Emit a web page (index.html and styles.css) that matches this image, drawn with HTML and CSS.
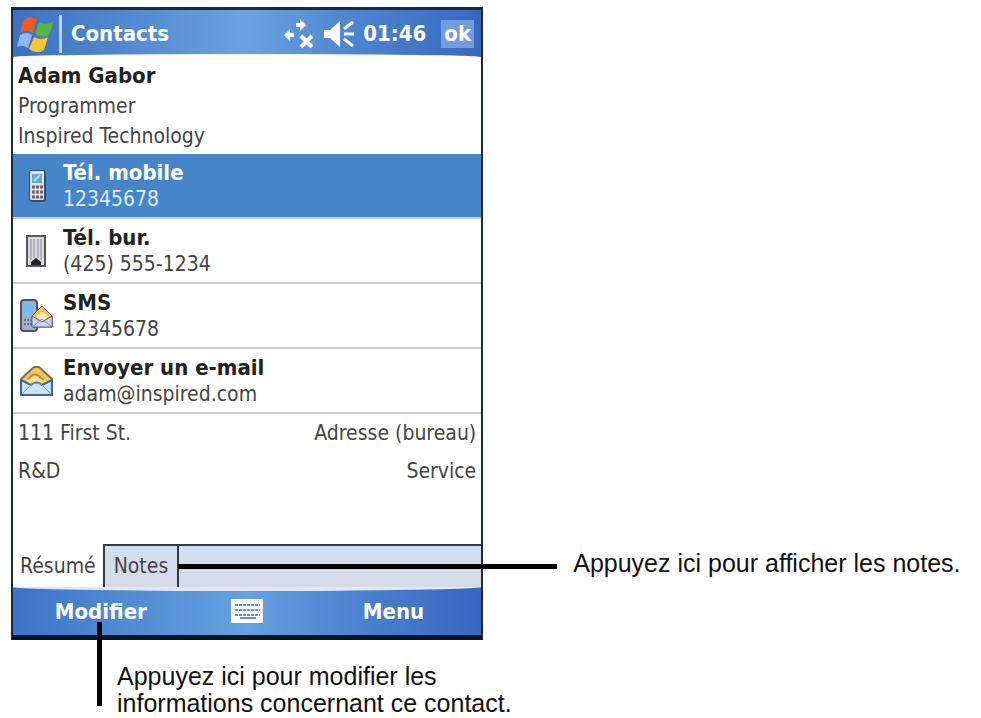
FILE: index.html
```html
<!DOCTYPE html>
<html lang="fr">
<head>
  <meta charset="UTF-8" />
  <meta name="viewport" content="width=device-width, initial-scale=1.0"/>
  <title>Contacts</title>
  <link rel="stylesheet" href="styles.css">
</head>
<body>
  <main class="guide">
    <section class="screen">
      <header class="title-bar">
        <svg class="flag" width="38" height="40" viewBox="0 0 38 40">
          <path d="M6 7 Q11 1 20 5 L16 19 Q10 14 3 19Z" fill="#ea5b25"/>
          <path d="M22 8 Q28 12 37 7 L32 21 Q26 25 18 20Z" fill="#55b848"/>
          <path d="M3 21 Q9 17 15 21 L11 34 Q6 30 0 33Z" fill="#8fb6f5"/>
          <path d="M17 23 Q24 27 31 23 L27 36 Q20 41 12 35Z" fill="#f8c62e"/>
        </svg>
        <span class="separator"></span>
        <h1>Contacts</h1>
        <svg class="connection" width="32" height="32" viewBox="0 0 32 32">
          <path d="M1 17l6-6v4h4v4H7v4z" fill="#fff"/>
          <path d="M23 7l-6-6v4h-4v4h4v4z" fill="#fff"/>
          <path d="M18 18l11 11M29 18L18 29" fill="none" stroke="#fff" stroke-width="4"/>
        </svg>
        <svg class="speaker" width="32" height="28" viewBox="0 0 32 28">
          <path d="M1 10h6L17 1v26L7 18H1z" fill="#fff"/>
          <path d="M21 9l9-7M21 14h10M21 19l9 7" stroke="#fff" stroke-width="3"/>
        </svg>
        <span class="clock">01:46</span>
        <button class="ok">ok</button>
      </header>

      <div class="identity">
        <h2>Adam Gabor</h2>
        <p>Programmer</p>
        <p>Inspired Technology</p>
      </div>

      <nav class="actions">
        <a class="action selected" href="#mobile">
          <svg width="34" height="34" viewBox="0 0 34 34">
            <rect x="9" y="1" width="17" height="32" rx="3" fill="#3d4a68"/>
            <rect x="10" y="2" width="14" height="29" rx="1" fill="#dce1ec"/>
            <rect x="12" y="5" width="10" height="9" fill="#62a5cf"/>
            <path d="M14 12l6-6" stroke="#b6e4ec" stroke-width="2"/>
            <path d="M12 18h11M12 23h11M12 28h11" stroke="#7a5b66" stroke-width="3" stroke-dasharray="3 1"/>
          </svg>
          <span class="action-text"><strong>Tél. mobile</strong><span>12345678</span></span>
        </a>
        <a class="action" href="#bureau">
          <svg width="34" height="34" viewBox="0 0 34 34">
            <rect x="7" y="2" width="18" height="30" fill="#d9d9df" stroke="#55555b" stroke-width="2"/>
            <path d="M11 5v21M14 5v19M18 5v19M21 5v21" stroke="#8e8e98"/>
            <path d="M11 31v-3l5-4 5 4v3z" fill="#222"/>
          </svg>
          <span class="action-text"><strong>Tél. bur.</strong><span>(425) 555-1234</span></span>
        </a>
        <a class="action" href="#sms">
          <svg width="34" height="34" viewBox="0 0 34 34">
            <rect x="1" y="1" width="16" height="31" rx="3" fill="#a2b0c5" stroke="#4a566e" stroke-width="2"/>
            <rect x="4" y="5" width="10" height="12" fill="#71bdf0"/>
            <path d="M4 21h9M4 25h9" stroke="#69758c" stroke-width="2" stroke-dasharray="2 1"/>
            <path d="M12 17L22 7l10 10v11H12z" fill="#f3c057" stroke="#765a3d"/>
            <path d="M16 17l6-4 7 4-7 6z" fill="#fff0b5"/>
            <path d="M12 17l10 6 10-6v11H12z" fill="#cfd4f4" stroke="#555f8b"/>
            <path d="M12 28l10-8 10 8" fill="none" stroke="#7e88b7"/>
          </svg>
          <span class="action-text"><strong>SMS</strong><span>12345678</span></span>
        </a>
        <a class="action" href="#email">
          <svg width="34" height="34" viewBox="0 0 34 34">
            <path d="M1 15L14 3h5l13 12v16H1z" fill="#f3c557" stroke="#7f7253" stroke-width="2"/>
            <path d="M6 18l5-7q5-3 9 0l7 7-10 5z" fill="#ffe18d"/>
            <path d="M8 15q7-8 12-2l4 3" fill="none" stroke="#c78827" stroke-width="2"/>
            <path d="M1 16l10 5q6-5 11 0l10-5v15H1z" fill="#c9e4fa" stroke="#43658a" stroke-width="2"/>
            <path d="M2 30l9-9q6-4 11 0l9 9" fill="none" stroke="#769fc5"/>
          </svg>
          <span class="action-text"><strong>Envoyer un e-mail</strong><span>adam@inspired.com</span></span>
        </a>
      </nav>

      <dl class="details">
        <div><dd>111 First St.</dd><dt>Adresse (bureau)</dt></div>
        <div><dd>R&amp;D</dd><dt>Service</dt></div>
      </dl>

      <div class="tabs">
        <button class="tab current">Résumé</button>
        <button class="tab">Notes</button>
        <span class="pointer-notes"></span>
      </div>

      <footer class="softkeys">
        <button class="softkey">Modifier</button>
        <button class="keyboard" aria-label="Clavier">
          <svg width="32" height="24" viewBox="0 0 32 24">
            <rect width="32" height="24" rx="1" fill="#fff"/>
            <path d="M4 6h25M4 11h25M4 16h25" stroke="#5b91cb" stroke-width="2" stroke-dasharray="3 1"/>
            <path d="M9 19h16" stroke="#5b91cb" stroke-width="2"/>
          </svg>
        </button>
        <button class="softkey">Menu</button>
        <span class="pointer-edit"></span>
      </footer>
    </section>

    <p class="note note-tabs">Appuyez ici pour afficher les notes.</p>
    <p class="note note-edit">Appuyez ici pour modifier les<br>informations concernant ce contact.</p>
  </main>
</body>
</html>
```
FILE: styles.css
```css
* { box-sizing: border-box; }
body {
  margin: 0; background: #fff; color: #444;
  font-family: "DejaVu Sans Condensed", "DejaVu Sans", sans-serif;
  font-stretch: condensed;
  font-size: 21px; line-height: 27px;
}
h1, h2, p, dl, dd, dt { margin: 0; }
h1, h2, strong, .clock { font-size: 22px; font-weight: bold; }
button {
  padding: 0; border: 0; background: none; color: inherit;
  font: inherit;
}
svg { display: block; flex: none; }

.guide {
  display: grid;
  grid-template-columns: 37fr 39fr;
  padding: 7px 0 0 11px;
}
.screen {
  border: 2px solid #202836;
  border-top-width: 3px;
  border-bottom: 5px solid #081426;
  background: #fff;
}

.title-bar {
  position: relative;
  display: flex; align-items: center;
  height: 47px; padding: 0 7px 0 4px;
  background: linear-gradient(90deg, #3c70c2, #69a3df 50%, #4b82ce 75%, #3768c0);
  color: #fff;
}
.title-bar::after {
  content: ""; position: absolute; left: 0; right: 0; bottom: 0;
  height: 3px; background: #fff;
  border-radius: 50% 50% 0 0 / 100% 100% 0 0;
}
.separator { width: 3px; height: 38px; margin: 0 9px 0 4px; background: #b9d2ef; }
.title-bar h1 { flex: 1; }
.connection { margin-right: 8px; }
.speaker { margin-right: 8px; }
.clock { margin-right: 15px; }
.ok, .softkey { font-weight: bold; font-size: 22px; }
.ok { height: 28px; width: 33px; background: #719ddb; }

.identity { height: 97px; padding: 4px 5px; line-height: 30px; }
.identity h2 { color: #222; }

.action {
  display: flex; align-items: center; gap: 9px;
  height: 65px; padding: 0 7px;
  border-bottom: 2px solid #ccc;
  color: #444; text-decoration: none;
}
.action strong { color: #222; }
.action-text { display: flex; flex-direction: column; }
.selected { background: #4685c9; color: #dcecff; }
.selected strong { color: #fff; }

.details { height: 130px; padding: 0 5px; line-height: 38px; }
.details div { display: flex; justify-content: space-between; }

.tabs {
  position: relative;
  display: flex; height: 43px;
  border-top: 2px solid #333b46;
  background: linear-gradient(#cfdff2, #d6dbe5);
}
.tab { padding: 0 9px; border-right: 2px solid #333b46; }
.current { margin-top: -2px; padding: 2px 7px 0; background: #fff; }
/* leader line from the Notes tab to its caption */
.pointer-notes {
  position: absolute; left: 165px; right: -76px; top: 18px;
  height: 5px; background: #000;
}

.softkeys {
  position: relative;
  display: grid; grid-template-columns: 3fr 2fr 3fr; align-items: center;
  height: 48px;
  background: linear-gradient(90deg, #3c74c8, #65a3df 50%, #4a80ce 75%, #3768c0);
  color: #fff;
}
.softkeys::before {
  content: ""; position: absolute; left: 0; right: 0; top: 0;
  height: 4px; background: #dfe8f4;
  border-radius: 0 0 50% 50% / 0 0 100% 100%;
}
.keyboard { display: flex; justify-content: center; }
.pointer-edit {
  position: absolute; left: 84px; top: 35px;
  width: 5px; height: 84px; background: #000;
}

.note {
  color: #111;
  font-family: "Liberation Sans", Arial, sans-serif;
  font-stretch: normal;
  font-size: 25px; line-height: 27px;
}
.note-tabs { align-self: end; padding: 0 0 63px 90px; white-space: nowrap; }
.note-edit { grid-column: 1 / -1; padding: 23px 0 0 106px; }
```
